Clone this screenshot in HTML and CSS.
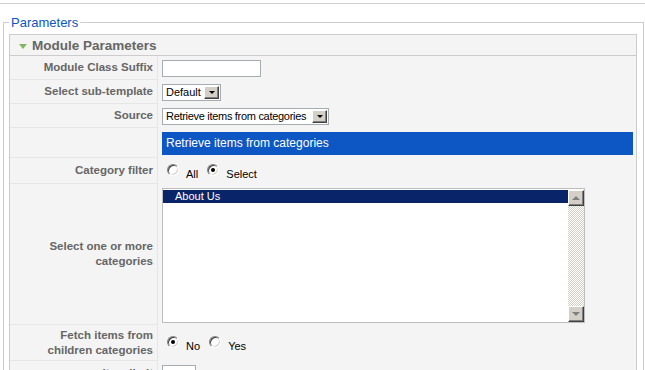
FILE: index.html
```html
<!DOCTYPE html>
<html lang="en">
<head>
  <meta charset="UTF-8">
  <title>Module Parameters</title>
  <link rel="stylesheet" href="styles.css">
</head>
<body>
  <div class="topline"></div>

  <!-- Parameters -->
  <fieldset class="params">
    <legend>Parameters</legend>

    <div class="panel">
      <h3 class="panel-title"><span class="toggle"></span>Module Parameters</h3>

      <table class="paramlist">
        <tr class="row-1">
          <td class="key">Module Class Suffix</td>
          <td class="value"><input type="text" class="text-field"></td>
        </tr>
        <tr class="row-2">
          <td class="key">Select sub-template</td>
          <td class="value">
            <div class="dropdown dropdown-small"><span class="dropdown-text">Default</span><span class="dropdown-btn"></span></div>
          </td>
        </tr>
        <tr class="row-3">
          <td class="key">Source</td>
          <td class="value">
            <div class="dropdown dropdown-wide"><span class="dropdown-text">Retrieve items from categories</span><span class="dropdown-btn"></span></div>
          </td>
        </tr>
        <tr class="row-4">
          <td class="key"></td>
          <td class="value"><div class="info-bar">Retrieve items from categories</div></td>
        </tr>
        <tr class="row-5">
          <td class="key">Category filter</td>
          <td class="value">
            <label class="radio"><span class="radio-dot"></span><span class="radio-label">All</span></label>
            <label class="radio"><span class="radio-dot checked"></span><span class="radio-label">Select</span></label>
          </td>
        </tr>
        <tr class="row-6">
          <td class="key">Select one or more<br>categories</td>
          <td class="value">
            <div class="listbox">
              <div class="listbox-items">
                <div class="listbox-item selected">About Us</div>
              </div>
              <div class="scrollbar">
                <span class="scroll-btn up"></span>
                <span class="scroll-track"></span>
                <span class="scroll-btn down"></span>
              </div>
            </div>
          </td>
        </tr>
        <tr class="row-7">
          <td class="key">Fetch items from<br>children categories</td>
          <td class="value">
            <label class="radio"><span class="radio-dot checked"></span><span class="radio-label">No</span></label>
            <label class="radio"><span class="radio-dot"></span><span class="radio-label">Yes</span></label>
          </td>
        </tr>
        <tr class="row-8">
          <td class="key">Item limit</td>
          <td class="value"><input type="text" class="text-field small-field" value=""></td>
        </tr>
      </table>
    </div>
  </fieldset>
</body>
</html>
```

FILE: styles.css
```css
body {
  margin: 0;
  font-family: 'Liberation Sans', Arial, sans-serif;
  font-size: 11px;
  background: #fff;
  color: #333;
  overflow: hidden;
}

.topline {
  margin-top: 3px;
  border-top: 1px solid #d0d0d0;
}

.params {
  margin: 10px 1px 0 3px;
  padding: 4px 6px 0 5px;
  border: 1px solid #ccc;
  border-bottom: none;
  min-width: 0;
}

.params legend {
  padding: 1px 2px 0;
  color: #0b55c4;
  font-size: 13px;
  line-height: 15px;
}

/* Slider panel */
.panel {
  border: 1px solid #ccc;
  border-bottom: none;
  background: #f4f4f4;
}

.panel-title {
  margin: 0;
  height: 20px;
  line-height: 21px;
  padding-left: 22px;
  border-bottom: 1px solid #ccc;
  color: #666;
  font-size: 13.5px;
  font-weight: bold;
  position: relative;
}

.toggle {
  position: absolute;
  left: 9px;
  top: 9px;
  width: 0;
  height: 0;
  border-left: 4px solid transparent;
  border-right: 4px solid transparent;
  border-top: 5px solid #7fb85e;
}

/* Parameter table */
.paramlist {
  width: 100%;
  border-collapse: separate;
  border-spacing: 0;
}

.paramlist td {
  padding: 0;
  vertical-align: middle;
}

.paramlist .key {
  width: 143px;
  padding-right: 4px;
  text-align: right;
  color: #666;
  font-size: 11.5px;
  font-weight: bold;
  line-height: 15px;
  border-bottom: 1px solid #e6e6e6;
  border-right: 1px solid #e6e6e6;
}

.paramlist .value {
  padding: 0 3px 0 4px;
}

.row-1 td { height: 23px; }
.row-2 td { height: 23px; }
.row-3 td { height: 23px; }
.row-4 td { height: 29px; }
.row-5 td { height: 25px; }
.row-5 .value { height: 23px; padding-top: 2px; }
.row-6 td { height: 140px; }
.row-6 .value { height: 136px; padding-top: 3px; padding-bottom: 1px; }
.row-7 td { height: 35px; }
.row-7 .value { height: 33px; padding-top: 2px; }
.row-8 td { height: 30px; vertical-align: top; }
.row-8 .key { padding-top: 5px; }

.text-field {
  display: block;
  box-sizing: border-box;
  width: 99px;
  height: 17px;
  margin: 0;
  padding: 0 2px;
  border: 1px solid #a5acb2;
  background: #fff;
  font-family: inherit;
  font-size: 11px;
}

.small-field {
  width: 34px;
  margin-top: 4px;
}

/* Classic select boxes */
.dropdown {
  box-sizing: border-box;
  display: flex;
  align-items: center;
  height: 17px;
  border: 1px solid #a5acb2;
  background: #fff;
  padding: 1px;
  color: #000;
}

.dropdown-small { width: 59px; }
.dropdown-wide { width: 167px; }

.dropdown-text {
  flex: 1;
  padding-left: 2px;
  font-size: 11px;
  line-height: 13px;
  white-space: nowrap;
  overflow: hidden;
}

.dropdown-wide .dropdown-text {
  letter-spacing: -0.3px;
}

.dropdown-btn {
  box-sizing: border-box;
  position: relative;
  width: 15px;
  height: 13px;
  background: #d4d0c8;
  border: 1px solid;
  border-color: #fff #404040 #404040 #fff;
  box-shadow: inset -1px -1px #808080;
}

.dropdown-btn::after {
  content: "";
  position: absolute;
  left: 4px;
  top: 4px;
  border-left: 3px solid transparent;
  border-right: 3px solid transparent;
  border-top: 3px solid #000;
}

.info-bar {
  height: 23px;
  line-height: 23px;
  padding-left: 4px;
  background: #0d57c4;
  color: #fff;
  font-size: 12px;
}

/* Radio buttons */
.radio {
  display: inline-flex;
  align-items: flex-start;
  margin-right: 3px;
  color: #000;
}

.radio-dot {
  box-sizing: border-box;
  position: relative;
  width: 12px;
  height: 12px;
  margin: 0 7px 0 5px;
  border-radius: 50%;
  background: #fff;
  border: 1px solid;
  border-color: #808080 #fff #fff #808080;
  box-shadow: inset 1px 1px #404040, inset -1px -1px #d4d0c8;
}

.radio + .radio .radio-dot {
  margin-left: 3px;
}

.radio-dot.checked::after {
  content: "";
  position: absolute;
  left: 3px;
  top: 3px;
  width: 4px;
  height: 4px;
  border-radius: 50%;
  background: #000;
}

.radio-label {
  padding-top: 4px;
}

/* List box */
.listbox {
  box-sizing: border-box;
  display: flex;
  width: 423px;
  height: 135px;
  border: 1px solid #bdbdbd;
  background: #fff;
}

.listbox-items {
  flex: 1;
  padding-top: 1px;
}

.listbox-item {
  height: 13px;
  line-height: 13px;
  padding-left: 12px;
  color: #000;
}

.listbox-item.selected {
  background: #0a246a;
  color: #fff;
}

.scrollbar {
  display: flex;
  flex-direction: column;
  width: 16px;
  padding-top: 1px;
}

.scroll-track {
  flex: 1;
  background-color: #fff;
  background-image: repeating-conic-gradient(#d4d0c8 0 25%, #fff 0 50%);
  background-size: 2px 2px;
}

.scroll-btn {
  box-sizing: border-box;
  position: relative;
  height: 16px;
  background: #d4d0c8;
  border: 1px solid;
  border-color: #fff #404040 #404040 #fff;
  box-shadow: inset -1px -1px #808080;
}

.scroll-btn::after {
  content: "";
  position: absolute;
  left: 3px;
  border-left: 4px solid transparent;
  border-right: 4px solid transparent;
}

.scroll-btn.up::after {
  top: 5px;
  border-bottom: 4px solid #808080;
}

.scroll-btn.down::after {
  top: 5px;
  border-top: 4px solid #808080;
}
```
